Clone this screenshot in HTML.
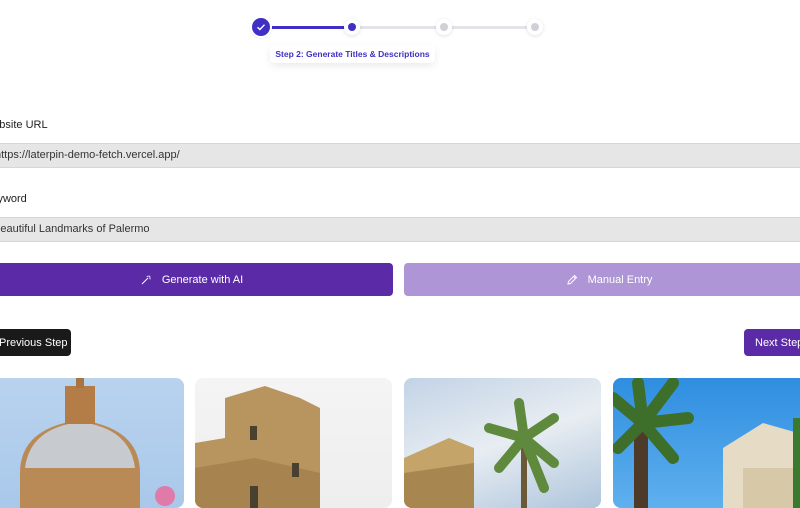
<!DOCTYPE html>
<html><head><meta charset="utf-8">
<style>
*{margin:0;padding:0;box-sizing:border-box}
body{width:800px;height:500px;overflow:hidden;background:#fff;font-family:"Liberation Sans",sans-serif;position:relative;color:#222}
.abs{position:absolute}
.line{height:3px;top:26px}
.dot{border-radius:50%;background:#fff;box-shadow:0 1px 4px rgba(0,0,0,.12)}
.lbl{font-size:11px;color:#222}
.inp{left:-10px;width:820px;height:25px;background:#e6e6e6;border:1px solid #d6d6d6;font-size:11px;line-height:23px;color:#333}
.btn{border-radius:4px;color:#fff;font-size:11px;display:flex;align-items:center;justify-content:center}
.card{top:378px;height:130px;border-radius:8px;overflow:hidden}
</style></head><body>
<div class="abs line" style="left:268px;width:84px;background:#3f2fc4"></div>
<div class="abs line" style="left:352px;width:184px;background:#e3e3e8"></div>
<div class="abs" style="left:252px;top:18px;width:18px;height:18px;border-radius:50%;background:#3f2fc4;box-shadow:0 0 0 2px #fff,0 1px 4px rgba(0,0,0,.2)">
<svg width="18" height="18" viewBox="0 0 18 18"><path d="M5.5 9.2l2.4 2.3 4.6-4.8" stroke="#fff" stroke-width="1.4" fill="none"/></svg></div>
<div class="abs dot" style="left:344px;top:19px;width:16px;height:16px"><div class="abs" style="left:4px;top:4px;width:8px;height:8px;border-radius:50%;background:#3f2fc4"></div></div>
<div class="abs dot" style="left:436px;top:19px;width:16px;height:16px"><div class="abs" style="left:4px;top:4px;width:8px;height:8px;border-radius:50%;background:#d0d0d6"></div></div>
<div class="abs dot" style="left:527px;top:19px;width:16px;height:16px"><div class="abs" style="left:4px;top:4px;width:8px;height:8px;border-radius:50%;background:#d0d0d6"></div></div>
<div class="abs" style="left:270px;top:45px;width:165px;height:18px;background:#fff;border-radius:4px;box-shadow:0 3px 8px rgba(0,0,0,.08);font-size:8.5px;font-weight:bold;color:#3f2fc4;text-align:center;line-height:18px">Step 2: Generate Titles &amp; Descriptions</div>
<div class="abs lbl" style="left:-17px;top:119px">Website URL</div>
<div class="abs inp" style="top:143px;padding-left:4px">https://laterpin-demo-fetch.vercel.app/</div>
<div class="abs lbl" style="left:-16px;top:193px">Keyword</div>
<div class="abs inp" style="top:217px;padding-left:2px">Beautiful Landmarks of Palermo</div>
<div class="abs btn" style="left:-10px;top:263px;width:403px;height:33px;background:#5b2aa6">
<svg width="12" height="12" viewBox="0 0 12 12" style="margin-right:10px"><path d="M2 10l6-6M7 2l.5 1M9.5 4.5l1 .5M9 1.5v1.5M10.5 3H9" stroke="#fff" stroke-width="1" fill="none"/></svg>Generate with AI</div>
<div class="abs btn" style="left:404px;top:263px;width:410px;height:33px;background:#ae95d5">
<svg width="12" height="12" viewBox="0 0 12 12" style="margin-right:10px"><path d="M2 10l.5-2.5 6-6 2 2-6 6zM7.5 2.5l2 2" stroke="#fff" stroke-width="1" fill="none"/></svg>Manual Entry</div>
<div class="abs btn" style="left:-10px;top:329px;width:81px;height:27px;background:#1a1a1a;justify-content:flex-start;padding-left:9px">Previous Step</div>
<div class="abs btn" style="left:744px;top:329px;width:70px;height:27px;background:#5b2aa6;justify-content:flex-start;padding-left:11px">Next Step</div>
<div class="abs card" style="left:-10px;width:194px;background:linear-gradient(#b9d3ee,#a9c8ea)">
<svg width="194" height="130"><path d="M30 130V95Q30 50 90 42Q150 50 150 95V130z" fill="#b98a56"/><path d="M35 90Q40 50 90 44Q140 50 145 90z" fill="#c7cbd0"/><rect x="75" y="8" width="30" height="38" fill="#b47d48"/><rect x="86" y="0" width="8" height="10" fill="#a8743f"/><circle cx="175" cy="118" r="10" fill="#e07aa8"/></svg></div>
<div class="abs card" style="left:195px;width:197px;background:linear-gradient(#f4f4f4,#eee)">
<svg width="197" height="130"><path d="M0 130V65L30 60V20L70 8L105 20L125 30V130z" fill="#b8945e"/><path d="M0 90L60 80L125 95V130H0z" fill="#a7844f"/><rect x="55" y="48" width="7" height="14" fill="#4a4030"/><rect x="97" y="85" width="7" height="14" fill="#4a4030"/><rect x="55" y="108" width="8" height="22" fill="#4a4030"/></svg></div>
<div class="abs card" style="left:404px;width:197px;background:linear-gradient(160deg,#c2d3e6,#e8edf2 50%,#aec5dc)">
<svg width="197" height="130"><path d="M0 130V80L45 60L70 70V130z" fill="#c5a46a"/><path d="M0 95L70 85V130H0z" fill="#a88650"/><path d="M120 130V70" stroke="#6b5a3a" stroke-width="6"/><path d="M120 60L85 50M120 60L150 40M120 60L95 90M120 60L150 85M120 60L115 25M120 60L140 110" stroke="#5f8a3e" stroke-width="10" stroke-linecap="round"/></svg></div>
<div class="abs card" style="left:613px;width:197px;background:linear-gradient(#2f8ee0,#5fb0ee)">
<svg width="197" height="130"><path d="M110 130V70L150 45L185 55V130z" fill="#e6dbc4"/><path d="M130 130V90h50v40" fill="#d7c9a8"/><path d="M28 130V50" stroke="#4d3a28" stroke-width="14"/><path d="M30 45L0 20M30 45L60 5M30 45L75 40M30 45L5 70M30 45L60 80M30 45L25 5" stroke="#3d6e2a" stroke-width="12" stroke-linecap="round"/><path d="M185 40V130" stroke="#3a7a2f" stroke-width="10"/></svg></div>
</body></html>
